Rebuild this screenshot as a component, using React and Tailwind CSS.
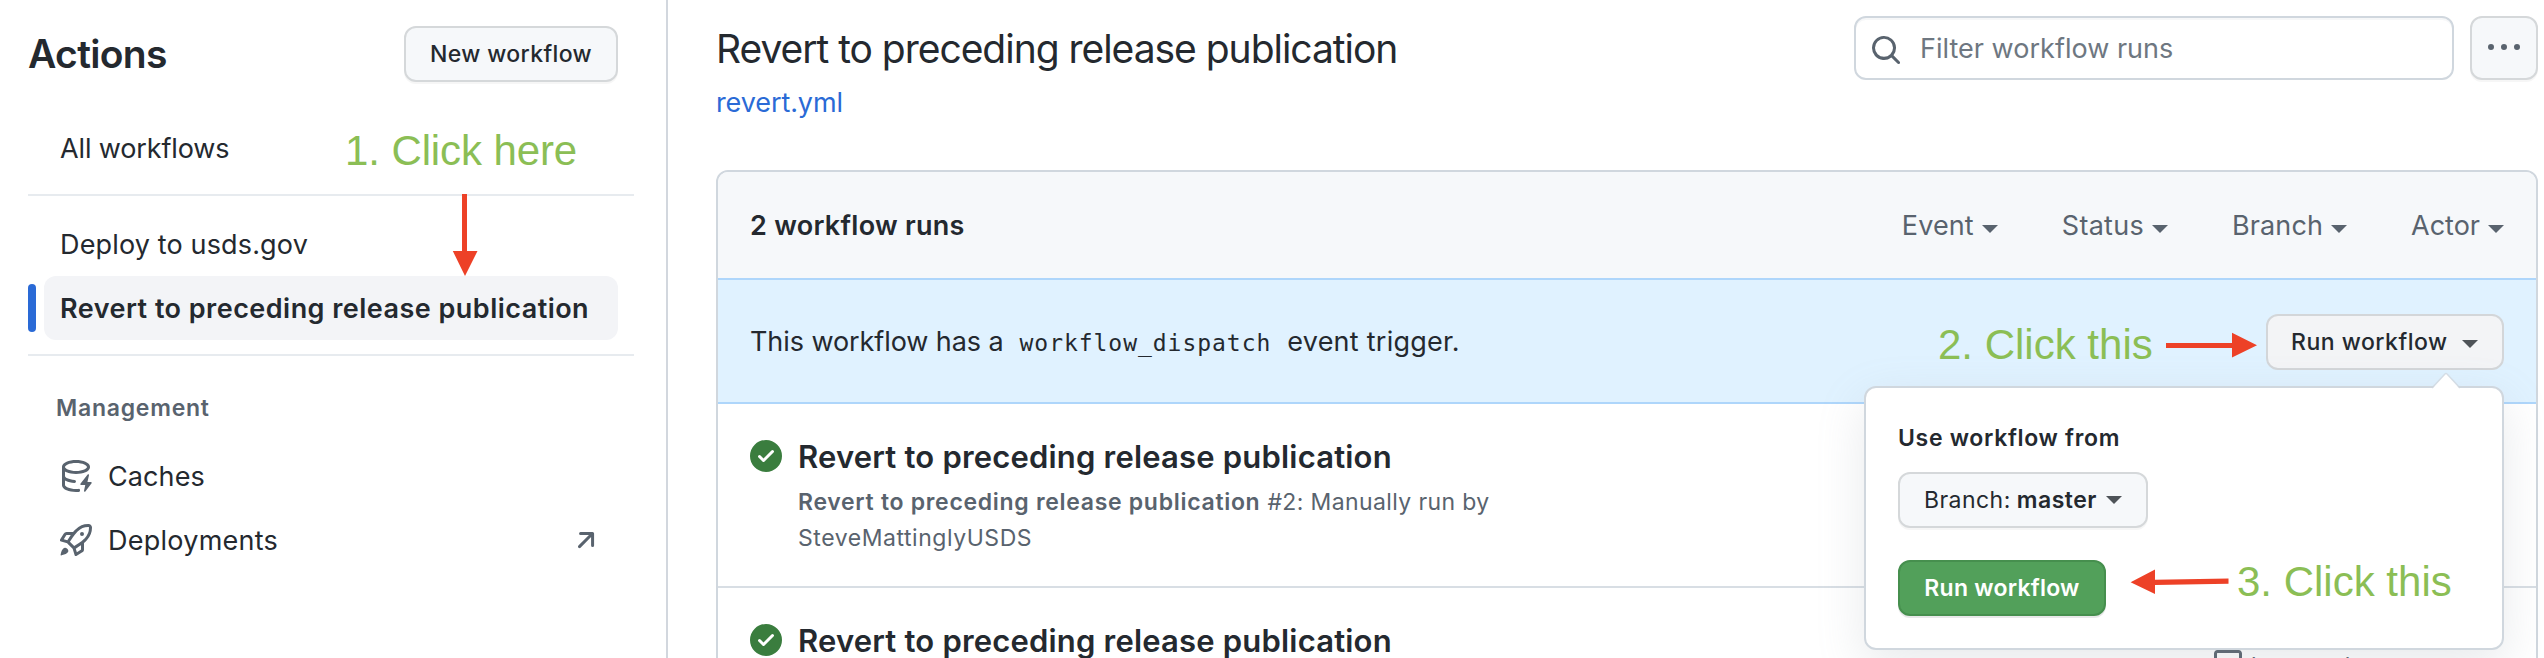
import React from "react";

const icons = {
  cache: [
    "M2.5 5.724V8c0 .248.238.7 1.169 1.159.874.43 2.144.745 3.62.822a.75.75 0 1 1-.078 1.498c-1.622-.085-3.102-.432-4.204-.975a5.565 5.565 0 0 1-.507-.28V12.5c0 .133.058.318.282.551.227.237.591.483 1.101.707 1.015.447 2.47.742 4.117.742.406 0 .802-.018 1.183-.052a.751.751 0 1 1 .134 1.494C8.89 15.98 8.45 16 8 16c-1.805 0-3.475-.32-4.721-.869-.623-.274-1.173-.619-1.579-1.041-.408-.425-.7-.964-.7-1.59v-9c0-.626.292-1.165.7-1.591.406-.42.956-.766 1.579-1.04C4.525.32 6.195 0 8 0c1.806 0 3.476.32 4.721.869.623.274 1.173.619 1.579 1.041.408.425.7.964.7 1.59 0 .626-.292 1.165-.7 1.591-.406.42-.956.766-1.578 1.04C11.475 6.68 9.805 7 8 7c-1.805 0-3.475-.32-4.721-.869a6.15 6.15 0 0 1-.779-.407Zm0-2.224c0 .133.058.318.282.551.227.237.591.483 1.101.707C4.898 5.205 6.353 5.5 8 5.5c1.646 0 3.101-.295 4.118-.742.508-.224.873-.471 1.1-.708.224-.232.282-.417.282-.55 0-.133-.058-.318-.282-.551-.227-.237-.591-.483-1.101-.707C11.102 1.795 9.647 1.5 8 1.5c-1.646 0-3.101.295-4.118.742-.508.224-.873.471-1.1.708-.224.232-.282.417-.282.55Z",
    "M14.49 7.582a.375.375 0 0 0-.66-.313l-3.625 4.625a.375.375 0 0 0 .295.606h2.127l-.619 2.922a.375.375 0 0 0 .666.304l3.125-4.125A.375.375 0 0 0 15.5 11h-1.778l.769-3.418Z",
  ],
  rocket: [
    "M14.064 0h.186C15.216 0 16 .784 16 1.75v.186a8.752 8.752 0 0 1-2.564 6.186l-.458.459c-.314.314-.641.616-.979.904v3.207c0 .608-.315 1.172-.833 1.49l-2.774 1.707a.749.749 0 0 1-1.11-.418l-.954-3.102a1.214 1.214 0 0 1-.145-.125L3.754 9.816a1.218 1.218 0 0 1-.124-.145L.528 8.717a.749.749 0 0 1-.418-1.11l1.71-2.774A1.748 1.748 0 0 1 3.31 4h3.204c.288-.338.59-.665.904-.979l.459-.458A8.749 8.749 0 0 1 14.064 0ZM8.938 3.623h-.002l-.458.458c-.76.76-1.437 1.598-2.02 2.5l-1.5 2.317 2.143 2.143 2.317-1.5c.902-.583 1.74-1.26 2.499-2.02l.459-.458a7.25 7.25 0 0 0 2.123-5.127V1.75a.25.25 0 0 0-.25-.25h-.186a7.249 7.249 0 0 0-5.125 2.123ZM3.56 14.56c-.732.732-2.334 1.045-3.005 1.148a.234.234 0 0 1-.201-.064.234.234 0 0 1-.064-.201c.103-.671.416-2.273 1.15-3.003a1.502 1.502 0 1 1 2.12 2.12Zm6.94-3.935c-.088.06-.177.118-.266.175l-2.35 1.521.548 1.783 1.949-1.2a.25.25 0 0 0 .119-.213ZM3.678 8.116 5.2 5.766c.058-.09.117-.178.176-.266H3.309a.25.25 0 0 0-.213.119l-1.2 1.95ZM12 5a1 1 0 1 1-2 0 1 1 0 0 1 2 0Z",
  ],
  search: [
    "M10.68 11.74a6 6 0 0 1-7.922-8.982 6 6 0 0 1 8.982 7.922l3.04 3.04a.749.749 0 0 1-.326 1.275.749.749 0 0 1-.734-.215ZM11.5 7a4.499 4.499 0 1 0-8.997 0A4.499 4.499 0 0 0 11.5 7Z",
  ],
  check: [
    "M8 16A8 8 0 1 1 8 0a8 8 0 0 1 0 16Zm3.78-9.72a.751.751 0 0 0-.018-1.042.751.751 0 0 0-1.042-.018L6.75 9.19 5.28 7.72a.751.751 0 0 0-1.042.018.751.751 0 0 0-.018 1.042l2 2a.75.75 0 0 0 1.06 0Z",
  ],
  kebab: [
    "M8 9a1.5 1.5 0 1 0 0-3 1.5 1.5 0 0 0 0 3ZM1.5 9a1.5 1.5 0 1 0 0-3 1.5 1.5 0 0 0 0 3Zm13 0a1.5 1.5 0 1 0 0-3 1.5 1.5 0 0 0 0 3Z",
  ],
  arrow: [
    "M4.53 4.75A.75.75 0 0 1 5.28 4h6.01a.75.75 0 0 1 .75.75v6.01a.75.75 0 0 1-1.5 0v-4.2l-5.26 5.261a.749.749 0 0 1-1.275-.326.749.749 0 0 1 .215-.734L9.48 5.5h-4.2a.75.75 0 0 1-.75-.75Z",
  ],
  calendar: [
    "M4.75 0a.75.75 0 0 1 .75.75V2h5V.75a.75.75 0 0 1 1.5 0V2h1.25c.966 0 1.75.784 1.75 1.75v10.5A1.75 1.75 0 0 1 13.25 16H2.75A1.75 1.75 0 0 1 1 14.25V3.75C1 2.784 1.784 2 2.75 2H4V.75A.75.75 0 0 1 4.75 0ZM2.5 7.5v6.75c0 .138.112.25.25.25h10.5a.25.25 0 0 0 .25-.25V7.5Zm10.75-4H2.75a.25.25 0 0 0-.25.25V6h11V3.75a.25.25 0 0 0-.25-.25Z",
  ],
};

function Icon({ name, className = "" }) {
  return (
    <svg viewBox="0 0 16 16" className={`size-8 shrink-0 fill-current ${className}`} aria-hidden="true">
      {icons[name].map((d) => (
        <path key={d} d={d} />
      ))}
    </svg>
  );
}

function Caret({ className = "" }) {
  return (
    <svg viewBox="0 0 16 8" className={`h-2 w-4 shrink-0 fill-current ${className}`} aria-hidden="true">
      <path d="M0 0h16l-8 8z" />
    </svg>
  );
}

function Sidebar() {
  return (
    <aside className="flex w-[668px] shrink-0 flex-col border-r-2 border-[#d2d7de] pt-[26px] pr-8 pl-7 text-[27px]">
      <div className="flex h-14 items-center justify-between pr-4">
        <h2 className="text-[39px] font-semibold tracking-[-0.68px]">Actions</h2>
        <button className="flex h-14 w-[214px] items-center justify-center rounded-xl border-2 border-[#d5d8da] bg-[#f6f8fa] text-[23px] font-medium tracking-[0.38px] shadow-[0_2px_0_rgba(27,31,36,0.04)]">
          New workflow
        </button>
      </div>

      <a className="mt-[34px] ml-4 flex h-16 items-center pt-0.5 pl-4 tracking-[-0.13px]">All workflows</a>
      <hr className="mt-3.5 mb-4 border-t-2 border-[#e7ebef]" />
      <a className="ml-4 flex h-16 items-center pt-0.5 pl-4 tracking-[0.15px]">Deploy to usds.gov</a>
      <div className="flex items-center gap-2 pr-4">
        <span className="h-12 w-2 rounded-md bg-[#2a6ad6]" />
        <a className="flex h-16 flex-1 items-center rounded-xl bg-[#f3f4f7] pt-0.5 pl-4 font-semibold tracking-[0.47px] whitespace-nowrap">
          Revert to preceding release publication
        </a>
      </div>
      <hr className="mt-3.5 border-t-2 border-[#e7ebef]" />

      <h3 className="mt-[34px] mb-[18px] flex h-9 items-center pl-7 text-[23px] font-semibold tracking-[0.75px] text-[#59636e]">
        Management
      </h3>
      <a className="flex h-16 items-center gap-4 pl-8 tracking-[0.1px]">
        <Icon name="cache" className="text-[#59636e]" />
        <span className="pt-0.5">Caches</span>
      </a>
      <a className="flex h-16 items-center gap-4 pr-8 pl-8 tracking-[0.25px]">
        <Icon name="rocket" className="text-[#59636e]" />
        <span className="pt-0.5">Deployments</span>
        <Icon name="arrow" className="ml-auto text-[#59636e]" />
      </a>
    </aside>
  );
}

function RunRow({ children, aside }) {
  return (
    <div className="flex h-[184px] items-start border-b-2 border-[#d8dee4] pt-9 pl-8">
      <Icon name="check" className="text-[#3a7d3e]" />
      <div className="ml-4 w-[720px] text-[23px] leading-9 text-[#59636e]">
        <h4 className="mb-[11px] pt-px text-[31px] leading-8 font-semibold tracking-[0.19px] text-[#24292f]">
          Revert to preceding release publication
        </h4>
        {children}
      </div>
      {aside}
    </div>
  );
}

function Popover() {
  return (
    <div className="absolute top-[386px] left-[1864px] flex h-[264px] w-[640px] flex-col items-start rounded-xl border-2 border-[#d0d7de] bg-white pt-10 pl-8 text-[23px] shadow-[0_16px_48px_rgba(140,149,159,0.2)]">
      <svg viewBox="0 0 32 17" className="absolute -top-[16px] right-[40px] h-[17px] w-8" aria-hidden="true">
        <path d="M2 17 L15 2 Q16 1 17 2 L30 17Z" fill="#fff" />
        <path d="M2 16 L15 2 Q16 1 17 2 L30 16" fill="none" stroke="#d0d7de" strokeOpacity=".8" strokeWidth="1.5" />
      </svg>
      <p className="leading-5 font-semibold tracking-[0.68px]">Use workflow from</p>
      <button className="mt-6 flex h-14 w-[250px] items-center rounded-xl border-2 border-[#d5d8da] bg-[#f6f8fa] pl-6 shadow-[0_2px_0_rgba(27,31,36,0.04)]">
        <span className="tracking-[0.45px]">Branch:</span>
        <span className="ml-[6px] font-semibold tracking-[0.5px]">master</span>
        <Caret className="ml-[9px] text-[#4e5358]" />
      </button>
      <button className="mt-8 flex h-14 w-[208px] items-center justify-center rounded-xl border-2 border-[#468f4e] bg-[#52a05a] font-semibold tracking-[0.24px] text-white shadow-[0_2px_0_rgba(27,31,36,0.1)]">
        Run workflow
      </button>
    </div>
  );
}

function Annotations() {
  return (
    <div className="pointer-events-none absolute inset-0 font-['Liberation_Sans',Arial,sans-serif] text-[42px] leading-[48px] whitespace-nowrap text-[#8bbe55]">
      <span className="absolute top-[127px] left-[345px] tracking-[-0.1px]">1. Click here</span>
      <span className="absolute top-[321px] left-[1938px]">2. Click this</span>
      <span className="absolute top-[558px] left-[2237px]">3. Click this</span>
      <svg viewBox="0 0 26 82" className="absolute top-[194px] left-[452px] h-[82px] w-[26px] fill-[#ed4127]">
        <path d="M10 0h5v57h10.500L13 82 .8 57H10z" />
      </svg>
      <svg viewBox="0 0 92 26" className="absolute top-[332px] left-[2166px] h-[26px] w-[92px] fill-[#ed4127]">
        <path d="M0 11v5h66v9.500L91 13.200 66 .8V11z" />
      </svg>
      <svg viewBox="0 0 100 26" className="absolute top-[569px] left-[2130px] h-[26px] w-[100px] fill-[#ed4127]">
        <path d="M.6 13.300 25 .5v10.200L98.500 9.600v5.200L25 15.900V25z" />
      </svg>
    </div>
  );
}

export default function App() {
  return (
    <div className="relative flex h-[658px] w-[2544px] overflow-hidden bg-white font-['Inter',sans-serif] text-[#24292f]">
      <Sidebar />
      <main className="flex flex-1 flex-col pt-4 pr-1.5 pl-12 text-[27px]">
        <div className="flex h-16 shrink-0 items-center">
          <h1 className="pt-0.5 text-[39px] tracking-[-1.03px] whitespace-nowrap">
            Revert to preceding release publication
          </h1>
          <div className="ml-auto flex h-16 w-[600px] items-center rounded-xl border-2 border-[#d0d7de] pl-3.5 tracking-[0.02px] text-[#6e7781] shadow-[inset_0_2px_0_rgba(208,215,222,0.2)]">
            <Icon name="search" className="mt-1 text-[#59636e]" />
            <span className="ml-[18px] pt-[3px]">Filter workflow runs</span>
          </div>
          <button className="ml-4 flex h-16 w-[68px] items-center justify-center rounded-xl border-2 border-[#d5d8da] bg-[#f6f8fa] text-[#59636e] shadow-[0_2px_0_rgba(27,31,36,0.04)]">
            <Icon name="kebab" />
          </button>
        </div>
        <a className="flex h-11 shrink-0 items-center pt-0.5 tracking-[-0.1px] text-[#2a6ad6]">revert.yml</a>

        <section className="mt-[46px] h-[600px] shrink-0 rounded-t-xl border-2 border-[#d0d7de]">
          <header className="flex h-[106px] items-center rounded-t-[10px] bg-[#f6f8fa] pt-[3px] pr-8 pl-8">
            <strong className="font-semibold tracking-[0.28px]">2 workflow runs</strong>
            <div className="ml-auto flex gap-16 text-[#59636e]">
              <span className="flex items-center gap-2 tracking-[0.1px]">Event<Caret className="mt-1" /></span>
              <span className="flex items-center gap-2 tracking-[0.3px]">Status<Caret className="mt-1" /></span>
              <span className="flex items-center gap-2 tracking-[0.1px]">Branch<Caret className="mt-1" /></span>
              <span className="flex items-center gap-2">Actor<Caret className="mt-1" /></span>
            </div>
          </header>
          <div className="flex h-[126px] items-center border-y-2 border-[#aed6fb] bg-[#e0f2ff] pt-0.5 pr-8 pl-8">
            <p className="flex items-baseline whitespace-nowrap">
              <span className="tracking-[-0.08px]">This workflow has a</span>
              <code className="ml-4 font-['DejaVu_Sans_Mono',monospace] text-[23px] tracking-[0.96px]">workflow_dispatch</code>
              <span className="ml-4 tracking-[0.25px]">event trigger.</span>
            </p>
            <button className="ml-auto flex h-14 w-[238px] items-center rounded-xl border-2 border-[#d3d6d9] bg-[#f3f4f6] pl-[23px] text-[23px] font-medium tracking-[0.5px]">
              Run workflow
              <Caret className="mt-1 ml-3.5 text-[#4e5358]" />
            </button>
          </div>
          <RunRow>
            <p>
              <b className="font-semibold tracking-[0.7px]">Revert to preceding release publication</b>
              <span className="ml-[7px] tracking-[0.38px]">#2: Manually run by</span>
            </p>
            <p className="tracking-[0.55px]">SteveMattinglyUSDS</p>
          </RunRow>
          <RunRow
            aside={
              <div className="mt-[22px] mr-[285px] ml-auto flex items-center gap-[7px] text-[23px] leading-8 whitespace-nowrap text-[#59636e]">
                <Icon name="calendar" />
                <div className="mt-1 -mb-1 flex w-0 tracking-[0.5px]">last week</div>
              </div>
            }
          />
        </section>
      </main>
      <Popover />
      <Annotations />
    </div>
  );
}
